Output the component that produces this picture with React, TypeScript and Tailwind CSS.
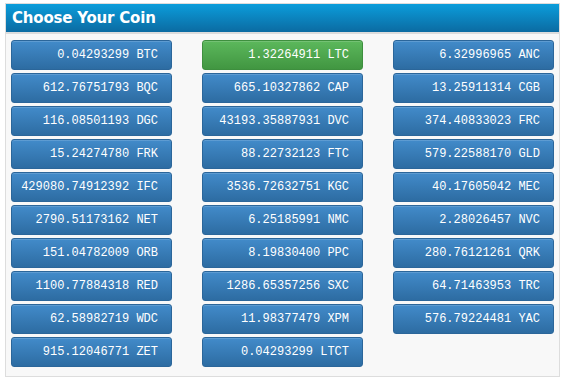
const coins: { amount: string; code: string; active?: boolean }[] = [
  { amount: "0.04293299", code: "BTC" },
  { amount: "1.32264911", code: "LTC", active: true },
  { amount: "6.32996965", code: "ANC" },
  { amount: "612.76751793", code: "BQC" },
  { amount: "665.10327862", code: "CAP" },
  { amount: "13.25911314", code: "CGB" },
  { amount: "116.08501193", code: "DGC" },
  { amount: "43193.35887931", code: "DVC" },
  { amount: "374.40833023", code: "FRC" },
  { amount: "15.24274780", code: "FRK" },
  { amount: "88.22732123", code: "FTC" },
  { amount: "579.22588170", code: "GLD" },
  { amount: "429080.74912392", code: "IFC" },
  { amount: "3536.72632751", code: "KGC" },
  { amount: "40.17605042", code: "MEC" },
  { amount: "2790.51173162", code: "NET" },
  { amount: "6.25185991", code: "NMC" },
  { amount: "2.28026457", code: "NVC" },
  { amount: "151.04782009", code: "ORB" },
  { amount: "8.19830400", code: "PPC" },
  { amount: "280.76121261", code: "QRK" },
  { amount: "1100.77884318", code: "RED" },
  { amount: "1286.65357256", code: "SXC" },
  { amount: "64.71463953", code: "TRC" },
  { amount: "62.58982719", code: "WDC" },
  { amount: "11.98377479", code: "XPM" },
  { amount: "576.79224481", code: "YAC" },
  { amount: "915.12046771", code: "ZET" },
  { amount: "0.04293299", code: "LTCT" },
];

export default function App() {
  return (
    <div className="w-[566px] h-[381px] bg-white pt-[3px] pl-[5px]">
      <div className="w-[555px] h-[374px] border border-[#dddddd] bg-[#f8f8f8]">
        {/* Header */}
        <div className="h-[30px] flex items-center px-[6px] bg-gradient-to-b from-[#0b9ddb] to-[#0b6ba2] border-b-2 border-[#dcdcdc]">
          <h1 className="text-white font-bold text-[15px] font-['DejaVu_Sans',Verdana,sans-serif] tracking-[-0.2px]">
            Choose Your Coin
          </h1>
        </div>

        {/* Coin grid */}
        <div className="grid grid-cols-3 gap-x-[30px] gap-y-[3px] px-[5px] pt-[6px]">
          {coins.map((c, i) => (
            <button
              key={i}
              className={
                c.active
                  ? "h-[30px] rounded-[3px] border border-[#3e8f3e] bg-gradient-to-b from-[#5cb85c] to-[#419641] text-white text-right pr-[13px] font-['Liberation_Mono',monospace] text-[12px] shadow-[inset_0_1px_0_rgba(255,255,255,0.15)]"
                  : "h-[30px] rounded-[3px] border border-[#2b669a] bg-gradient-to-b from-[#428bca] to-[#2d6ca2] text-white text-right pr-[13px] font-['Liberation_Mono',monospace] text-[12px] shadow-[inset_0_1px_0_rgba(255,255,255,0.15)]"
              }
            >
              {c.amount} {c.code}
            </button>
          ))}
        </div>
      </div>
    </div>
  );
}
